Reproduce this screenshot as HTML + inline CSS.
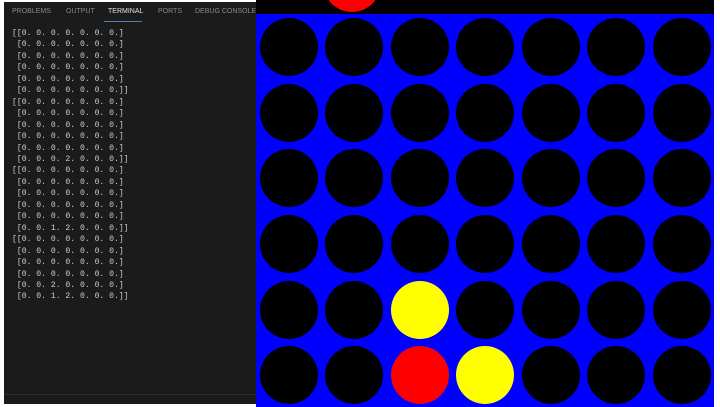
<!DOCTYPE html>
<html><head><style>
html,body{margin:0;padding:0;width:720px;height:407px;overflow:hidden;background:#fff;}
#left{position:absolute;left:4px;top:2px;width:252px;height:402px;background:#1b1b1b;}
.tabs{position:absolute;top:6px;left:8px;font:7px "Liberation Sans",sans-serif;color:#8a8a8a;white-space:nowrap;}
.tabs span{position:absolute;}
.ul{position:absolute;left:100px;top:19px;width:38px;height:1px;background:#4a7fb0;}
pre{position:absolute;left:8px;top:26px;margin:0;font:8.1px/11.45px "Liberation Mono",monospace;color:#cfcfcf;}
.hl{position:absolute;left:0;top:392px;width:252px;height:1px;background:#2c2c2c;}
</style></head><body>
<div id="left">
<div class="tabs"><span style="left:0">PROBLEMS</span><span style="left:54px">OUTPUT</span><span style="left:96px;color:#e0e0e0">TERMINAL</span><span style="left:146px">PORTS</span><span style="left:183px">DEBUG CONSOLE</span></div>
<div class="ul"></div>
<pre>[[0. 0. 0. 0. 0. 0. 0.]
 [0. 0. 0. 0. 0. 0. 0.]
 [0. 0. 0. 0. 0. 0. 0.]
 [0. 0. 0. 0. 0. 0. 0.]
 [0. 0. 0. 0. 0. 0. 0.]
 [0. 0. 0. 0. 0. 0. 0.]]
[[0. 0. 0. 0. 0. 0. 0.]
 [0. 0. 0. 0. 0. 0. 0.]
 [0. 0. 0. 0. 0. 0. 0.]
 [0. 0. 0. 0. 0. 0. 0.]
 [0. 0. 0. 0. 0. 0. 0.]
 [0. 0. 0. 2. 0. 0. 0.]]
[[0. 0. 0. 0. 0. 0. 0.]
 [0. 0. 0. 0. 0. 0. 0.]
 [0. 0. 0. 0. 0. 0. 0.]
 [0. 0. 0. 0. 0. 0. 0.]
 [0. 0. 0. 0. 0. 0. 0.]
 [0. 0. 1. 2. 0. 0. 0.]]
[[0. 0. 0. 0. 0. 0. 0.]
 [0. 0. 0. 0. 0. 0. 0.]
 [0. 0. 0. 0. 0. 0. 0.]
 [0. 0. 0. 0. 0. 0. 0.]
 [0. 0. 2. 0. 0. 0. 0.]
 [0. 0. 1. 2. 0. 0. 0.]]</pre>
<div class="hl"></div>
</div>
<svg style="position:absolute;left:0;top:0" width="720" height="407">
<rect x="256" y="0" width="458" height="14" fill="#000"/>
<circle cx="352" cy="-17" r="29" fill="#f00"/>
<rect x="256" y="14" width="458" height="393" fill="#0000ff"/>
<g fill="#000">
<circle cx="289" cy="47" r="29"/><circle cx="354" cy="47" r="29"/><circle cx="420" cy="47" r="29"/><circle cx="485" cy="47" r="29"/><circle cx="551" cy="47" r="29"/><circle cx="616" cy="47" r="29"/><circle cx="682" cy="47" r="29"/>
<circle cx="289" cy="113" r="29"/><circle cx="354" cy="113" r="29"/><circle cx="420" cy="113" r="29"/><circle cx="485" cy="113" r="29"/><circle cx="551" cy="113" r="29"/><circle cx="616" cy="113" r="29"/><circle cx="682" cy="113" r="29"/>
<circle cx="289" cy="178" r="29"/><circle cx="354" cy="178" r="29"/><circle cx="420" cy="178" r="29"/><circle cx="485" cy="178" r="29"/><circle cx="551" cy="178" r="29"/><circle cx="616" cy="178" r="29"/><circle cx="682" cy="178" r="29"/>
<circle cx="289" cy="244" r="29"/><circle cx="354" cy="244" r="29"/><circle cx="420" cy="244" r="29"/><circle cx="485" cy="244" r="29"/><circle cx="551" cy="244" r="29"/><circle cx="616" cy="244" r="29"/><circle cx="682" cy="244" r="29"/>
<circle cx="289" cy="310" r="29"/><circle cx="354" cy="310" r="29"/><circle cx="485" cy="310" r="29"/><circle cx="551" cy="310" r="29"/><circle cx="616" cy="310" r="29"/><circle cx="682" cy="310" r="29"/>
<circle cx="289" cy="375" r="29"/><circle cx="354" cy="375" r="29"/><circle cx="551" cy="375" r="29"/><circle cx="616" cy="375" r="29"/><circle cx="682" cy="375" r="29"/>
</g>
<circle cx="420" cy="310" r="29" fill="#ffff00"/>
<circle cx="420" cy="375" r="29" fill="#ff0000"/>
<circle cx="485" cy="375" r="29" fill="#ffff00"/>
</svg>
</body></html>
